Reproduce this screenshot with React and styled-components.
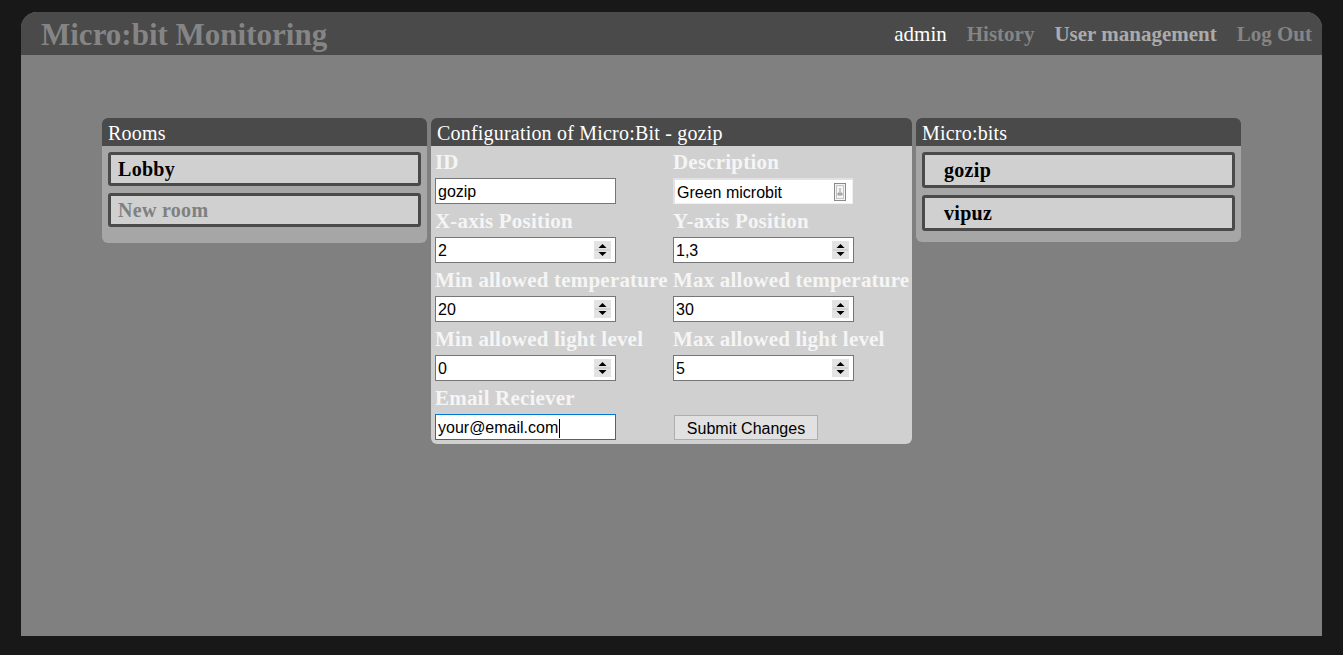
import React from "react"
import styled, { createGlobalStyle } from "styled-components"

const GlobalStyle = createGlobalStyle`
  html, body, #root {
    height: 100%;
  }
  body {
    margin: 0;
    padding: 12px 21px 19px;
    box-sizing: border-box;
    background: #181818;
    font-family: "Liberation Serif", "DejaVu Serif", serif;
  }
`

const Frame = styled.div`
  height: 100%;
  display: flex;
  flex-direction: column;
  background: #808080;
  border-radius: 16px 16px 0 0;
  overflow: hidden;
`

const Header = styled.header`
  height: 43px;
  flex-shrink: 0;
  display: flex;
  align-items: center;
  justify-content: space-between;
  padding: 2px 10px 0 20px;
  box-sizing: border-box;
  background: #4a4a4a;
`

const Title = styled.h1`
  margin: 0;
  font-size: 31px;
  font-weight: 700;
  color: #858585;
`

const Nav = styled.nav`
  display: flex;
  gap: 20px;
`

const NavLink = styled.a`
  font-size: 21px;
  font-weight: ${p => (p.$active ? 400 : 700)};
  color: ${p => p.$color};
  text-decoration: none;
  cursor: pointer;
`

const Main = styled.main`
  display: flex;
  justify-content: center;
  align-items: flex-start;
  gap: 4px;
  padding-top: 63px;
`

const Panel = styled.section`
  width: ${p => p.$width}px;
  border-radius: 6px;
  overflow: hidden;
`

const PanelTitle = styled.div`
  height: 28px;
  line-height: 30px;
  padding: 0 6px;
  background: #4a4a4a;
  color: #fff;
  font-size: 20px;
  letter-spacing: 0.2px;
`

const ListBody = styled.div`
  display: flex;
  flex-direction: column;
  gap: 7px;
  padding: 6px 6px ${p => p.$bottom}px;
  background: #a6a6a6;
`

const Item = styled.div`
  height: ${p => p.$height}px;
  box-sizing: border-box;
  display: flex;
  align-items: center;
  padding-left: ${p => p.$indent}px;
  border: 3px solid #4a4a4a;
  border-radius: 3px;
  background: #d0d0d0;
  font-size: 20px;
  font-weight: 700;
  letter-spacing: 0.3px;
  color: ${p => (p.$muted ? "#808080" : "#000")};
`

const Form = styled.form`
  display: grid;
  grid-template-columns: 238px 238px;
  row-gap: 7px;
  padding: 6px 4px 4px;
  background: #d0d0d0;
`

const Group = styled.div`
  display: flex;
  flex-direction: column;
`

const Label = styled.label`
  height: 26px;
  line-height: 20px;
  font-size: 21px;
  font-weight: 700;
  letter-spacing: 0.2px;
  color: #f5f5f5;
  white-space: nowrap;
`

const Field = styled.div`
  position: relative;
  width: 181px;
  height: 26px;
  box-sizing: border-box;
  display: flex;
  align-items: center;
  padding: 2px 2px 0;
  border: 1px solid ${p => (p.$focus ? "#0078d7" : "#767676")};
  background: #fff;
  font-family: "Liberation Sans", Arial, sans-serif;
  font-size: 16px;
  color: #000;
`

const AreaField = styled(Field)`
  width: 180px;
  border-color: #e2e2e2 #f0f0f0 #f0f0f0 #e2e2e2;
  border-width: 2px 1px 1px 2px;
  background: #fff;
`

const Caret = styled.span`
  width: 1px;
  height: 19px;
  margin-left: 1px;
  background: #000;
`

const SpinBox = styled.svg`
  position: absolute;
  right: 4px;
  top: 3px;
`

const GripBox = styled.svg`
  position: absolute;
  right: 4px;
  top: 2px;
`

const SubmitButton = styled.button`
  width: 144px;
  height: 25px;
  margin: 1px 0 0 1px;
  padding: 2px 0 0;
  border: 1px solid #adadad;
  background: #e1e1e1;
  font-family: "Liberation Sans", Arial, sans-serif;
  font-size: 16px;
  color: #000;
`

const Spinner = () => (
  <SpinBox width="17" height="18" viewBox="0 0 17 18">
    <rect width="17" height="18" fill="#e3e3e3" />
    <line x1="1" y1="9" x2="16" y2="9" stroke="#c4c4c4" />
    <path d="M4.5 7 L8.5 3 L12.5 7 Z" fill="#000" />
    <path d="M4.5 11 L12.5 11 L8.5 15 Z" fill="#000" />
  </SpinBox>
)

const Grip = () => (
  <GripBox width="16" height="20" viewBox="0 0 16 20">
    <rect x="2.5" y="1.5" width="11" height="17" fill="#f4f4f4" stroke="#8a8a8a" />
    <rect x="4.5" y="3.5" width="7" height="13" fill="none" stroke="#c4c4c4" />
    <path d="M8 6 L8 10 M6 11 L10 11 L10 13 L6 13 Z" stroke="#9a9a9a" fill="#bdbdbd" />
  </GripBox>
)

const fields = [
  { label: "ID", value: "gozip" },
  { label: "Description", value: "Green microbit", area: true },
  { label: "X-axis Position", value: "2", spin: true },
  { label: "Y-axis Position", value: "1,3", spin: true },
  { label: "Min allowed temperature", value: "20", spin: true },
  { label: "Max allowed temperature", value: "30", spin: true },
  { label: "Min allowed light level", value: "0", spin: true },
  { label: "Max allowed light level", value: "5", spin: true },
  { label: "Email Reciever", value: "your@email.com", focus: true },
]

const App = () => {
  return (
    <>
      <GlobalStyle />
      <Frame>
        <Header>
          <Title>Micro:bit Monitoring</Title>
          <Nav>
            <NavLink $active $color="#fff">admin</NavLink>
            <NavLink $color="#858585">History</NavLink>
            <NavLink $color="#ababab">User management</NavLink>
            <NavLink $color="#858585">Log Out</NavLink>
          </Nav>
        </Header>
        <Main>
          <Panel $width={325}>
            <PanelTitle>Rooms</PanelTitle>
            <ListBody $bottom={16}>
              <Item $height={34} $indent={7}>Lobby</Item>
              <Item $height={34} $indent={7} $muted>New room</Item>
            </ListBody>
          </Panel>

          <Panel $width={481}>
            <PanelTitle>Configuration of Micro:Bit - gozip</PanelTitle>
            <Form onSubmit={e => e.preventDefault()}>
              {fields.map(f => (
                <Group key={f.label}>
                  <Label>{f.label}</Label>
                  {f.area ? (
                    <AreaField>
                      {f.value}
                      <Grip />
                    </AreaField>
                  ) : (
                    <Field $focus={f.focus}>
                      {f.value}
                      {f.focus && <Caret />}
                      {f.spin && <Spinner />}
                    </Field>
                  )}
                </Group>
              ))}
              <Group>
                <Label />
                <SubmitButton type="submit">Submit Changes</SubmitButton>
              </Group>
            </Form>
          </Panel>

          <Panel $width={325}>
            <PanelTitle>Micro:bits</PanelTitle>
            <ListBody $bottom={11}>
              <Item $height={36} $indent={19}>gozip</Item>
              <Item $height={36} $indent={19}>vipuz</Item>
            </ListBody>
          </Panel>
        </Main>
      </Frame>
    </>
  )
}

export default App
